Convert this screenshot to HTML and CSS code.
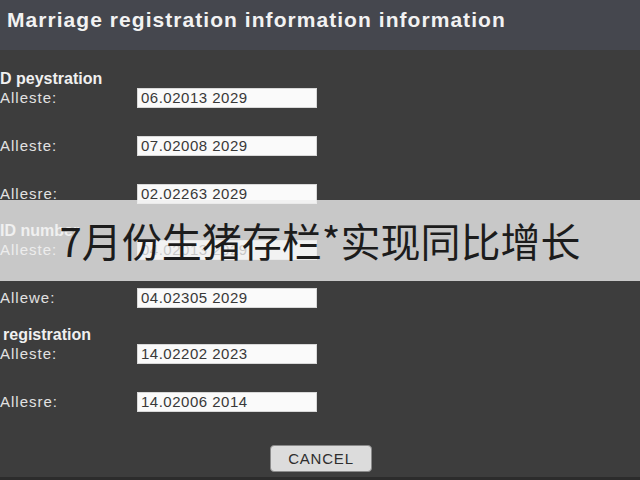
FILE: index.html
```html
<!DOCTYPE html>
<html lang="en">
<head>
<meta charset="utf-8">
<title>Marriage registration information</title>
<link rel="stylesheet" href="styles.css">
</head>
<body>
<div class="page">
  <header class="topbar">
    <h1 class="title">Marriage registration information information</h1>
  </header>
  <main class="content">
    <section class="section first">
      <h2 class="section-title">D peystration</h2>
      <div class="rows">
        <label class="label">Alleste:</label><div class="field">06.02013 2029</div>
        <label class="label">Alleste:</label><div class="field">07.02008 2029</div>
        <label class="label">Allesre:</label><div class="field">02.02263 2029</div>
      </div>
    </section>
    <section class="section">
      <h2 class="section-title">ID number</h2>
      <div class="rows">
        <label class="label">Alleste:</label><div class="field">04.02013 2029</div>
        <label class="label">Allewe:</label><div class="field">04.02305 2029</div>
      </div>
    </section>
    <section class="section">
      <h2 class="section-title indent">registration</h2>
      <div class="rows">
        <label class="label">Alleste:</label><div class="field">14.02202 2023</div>
        <label class="label">Allesre:</label><div class="field">14.02006 2014</div>
      </div>
    </section>
    <div class="actions">
      <button class="btn" type="button">CANCEL</button>
    </div>
  </main>
  <div class="bottom-strip"></div>
  <div class="banner">7月份生猪存栏*实现同比增长</div>
</div>
</body>
</html>
```

FILE: styles.css
```css
html, body {
  margin: 0;
  padding: 0;
}
body {
  background: #3d3d3d;
  font-family: "Liberation Sans", Arial, sans-serif;
  width: 640px;
  height: 480px;
  overflow: hidden;
}
.page {
  position: relative;
  width: 640px;
  height: 480px;
  display: flex;
  flex-direction: column;
}
.topbar {
  height: 50px;
  background: #45474e;
  box-sizing: border-box;
  padding: 8px 0 0 7px;
}
.title {
  margin: 0;
  font-size: 21px;
  line-height: 24px;
  font-weight: bold;
  letter-spacing: 1.05px;
  color: #f2f2f2;
}
.content {
  flex: 1;
  display: flex;
  flex-direction: column;
  padding-top: 19px;
}
.section {
  margin-top: 17px;
}
.section.first {
  margin-top: 0;
}
.section-title {
  margin: 0;
  font-size: 16px;
  line-height: 19px;
  font-weight: bold;
  color: #f0f0f0;
}
.indent {
  padding-left: 3px;
}
.rows {
  display: grid;
  grid-template-columns: 137px 180px;
  grid-auto-rows: 20px;
  row-gap: 28px;
  align-items: center;
}
.label {
  font-size: 15px;
  line-height: 20px;
  letter-spacing: 1px;
  color: #e2e2e2;
}
.field {
  height: 20px;
  box-sizing: border-box;
  background: #fafafa;
  border: 1px solid #d8d8d8;
  padding-left: 3px;
  font-size: 15px;
  line-height: 18px;
  letter-spacing: 0.5px;
  color: #383838;
}
.actions {
  display: flex;
  justify-content: center;
  margin-top: 33px;
  padding-left: 2px;
}
.btn {
  width: 102px;
  height: 27px;
  box-sizing: border-box;
  background: #dcdcdc;
  border: 1px solid #8a8a8a;
  border-radius: 4px;
  font-family: "Liberation Sans", Arial, sans-serif;
  font-size: 15px;
  letter-spacing: 0.8px;
  color: #2e2e2e;
  padding: 0;
}
.bottom-strip {
  height: 3px;
  background: #2c2c2c;
}
.banner {
  position: absolute;
  left: 0;
  right: 0;
  top: 200px;
  height: 81px;
  background: rgba(239, 239, 239, 0.78);
  color: #1c1c1c;
  font-family: "Noto Sans CJK SC", "Noto Sans", sans-serif;
  font-size: 40px;
  line-height: 81px;
  text-align: center;
}
```
